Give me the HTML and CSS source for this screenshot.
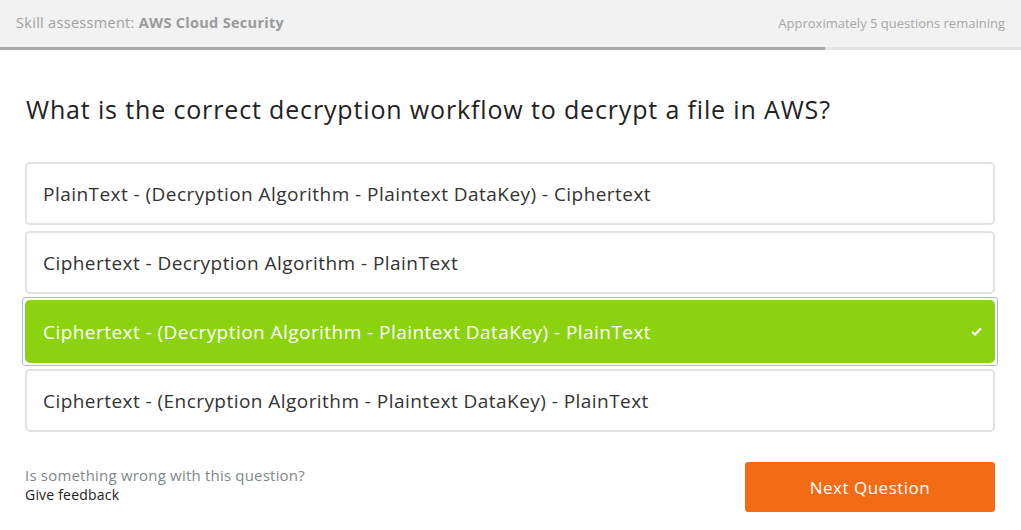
FILE: index.html
```html
<!DOCTYPE html>
<html>
<head>
<meta charset="utf-8">
<link rel="stylesheet" href="styles.css">
</head>
<body>
<header class="topbar">
  <div class="topbar-inner">
    <div class="title">Skill assessment: <strong>AWS Cloud Security</strong></div>
    <div class="remaining">Approximately 5 questions remaining</div>
  </div>
  <div class="progress"><div class="progress-fill" style="width: 825px"></div></div>
</header>
<main class="content">
  <h1 class="question">What is the correct decryption workflow to decrypt a file in AWS?</h1>
  <div class="options">
    <div class="option">PlainText - (Decryption Algorithm - Plaintext DataKey) - Ciphertext</div>
    <div class="option">Ciphertext - Decryption Algorithm - PlainText</div>
    <div class="option-focus">
      <div class="option selected">
        <span>Ciphertext - (Decryption Algorithm - Plaintext DataKey) - PlainText</span>
        <svg class="check" width="11" height="9" viewBox="0 0 11 9"><path d="M1 4.8 L4 7.5 L10 1.2" fill="none" stroke="#fff" stroke-width="2"/></svg>
      </div>
    </div>
    <div class="option">Ciphertext - (Encryption Algorithm - Plaintext DataKey) - PlainText</div>
  </div>
  <div class="footer">
    <div class="feedback">
      <div class="feedback-q">Is something wrong with this question?</div>
      <div class="feedback-link">Give feedback</div>
    </div>
    <button class="next">Next Question</button>
  </div>
</main>
</body>
</html>
```
FILE: styles.css
```css
* { box-sizing: border-box; }
body {
  margin: 0;
  background: #fff;
  font-family: "Open Sans", "Liberation Sans", sans-serif;
  color: #333;
}
.topbar { background: #f2f2f2; }
.topbar-inner {
  height: 47px;
  display: flex;
  justify-content: space-between;
  align-items: center;
  padding: 0 16px 2px 16px;
}
.title { font-size: 14.5px; color: #a0a0a0; letter-spacing: 0.3px; }
.title strong { font-weight: 700; color: #9a9a9a; }
.remaining { font-size: 13px; color: #a8a8a8; }
.progress { height: 3px; background: #e4e4e4; }
.progress-fill { height: 3px; background: #a8a8a8; }
.content { padding: 0 26px 0 25px; }
.question {
  margin: 43px 0 0 1px;
  font-size: 25px;
  font-weight: 400;
  color: #222;
  letter-spacing: 0.85px;
  line-height: 32px;
}
.options {
  margin-top: 37px;
  display: flex;
  flex-direction: column;
  gap: 6px;
}
.option {
  height: 63px;
  border: 2px solid #e2e2e2;
  border-radius: 5px;
  display: flex;
  align-items: center;
  justify-content: space-between;
  padding: 0 16px;
  font-size: 19px;
  color: #333;
  letter-spacing: 0.45px;
}
.option-focus {
  margin: -3px;
  padding: 2px;
  border: 1px solid #a8b8f6;
  border-radius: 3px;
}
.option.selected {
  height: 63px;
  background: #8cd30f;
  border-color: #8cd30f;
  color: #fff;
  padding-right: 11px;
}
.footer {
  margin-top: 30px;
  display: flex;
  justify-content: space-between;
  align-items: flex-start;
}
.feedback { padding-top: 4px; }
.feedback-q { font-size: 15px; color: #7b8a8a; line-height: 18px; letter-spacing: 0.2px; }
.feedback-link { font-size: 14px; color: #222; margin-top: 1px; font-weight: 500; letter-spacing: 0.2px; }
.next {
  width: 250px;
  height: 50px;
  background: #f46b16;
  border: none;
  border-radius: 3px;
  color: #fff;
  font-family: inherit;
  font-size: 17px;
  letter-spacing: 0.5px;
}
```
